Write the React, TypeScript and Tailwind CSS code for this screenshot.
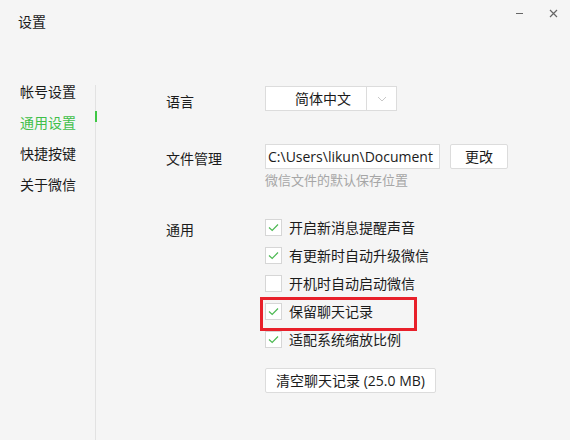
import React from "react";

const FONT = { fontFamily: '"Open Sans", "Noto Sans CJK SC", sans-serif' };

const NAV = ["帐号设置", "通用设置", "快捷按键", "关于微信"];

const OPTIONS = [
    { label: "开启新消息提醒声音", checked: true },
    { label: "有更新时自动升级微信", checked: true },
    { label: "开机时自动启动微信", checked: false },
    { label: "保留聊天记录", checked: true, marked: true },
    { label: "适配系统缩放比例", checked: true },
];

function Checkbox({ checked }: { checked: boolean }) {
    return (
        <div className="w-[17px] h-[17px] bg-white border border-[#d6d6d6] flex items-center justify-center shrink-0">
            {checked && (
                <svg width="15" height="15" viewBox="0 0 15 15">
                    <path d="M3 7.5 L6.2 10.5 L12 4.5" fill="none" stroke="#4cb952" strokeWidth="1.2" />
                </svg>
            )}
        </div>
    );
}

export default function App() {
    return (
        <div style={FONT} className="w-[570px] h-[440px] bg-[#f5f5f5] text-[#1b1b1b] flex flex-col overflow-hidden">
            {/* title bar */}
            <div className="h-[86px] shrink-0 flex items-start justify-between">
                <div className="pl-[18px] pt-[12px] text-[14px] leading-[20px]">设置</div>
                <div className="flex items-start">
                    <div className="w-[7px] h-px bg-[#666] mt-[13px]" />
                    <svg width="9" height="9" viewBox="0 0 9 9" className="mt-[9px] ml-[26px] mr-[12px]">
                        <path d="M1 1 L8 8 M8 1 L1 8" stroke="#666" strokeWidth="1.2" />
                    </svg>
                </div>
            </div>

            <div className="flex flex-1 min-h-0">
                {/* sidebar */}
                <div className="w-[96px] shrink-0 border-r border-[#e2e2e2] flex flex-col gap-[17px] -mt-px">
                    {NAV.map((item, i) => (
                        <div key={item} className="relative pl-[20px] text-[14px] leading-[14px] h-[14px]">
                            <span className={i === 1 ? "text-[#3fbf4a]" : ""}>{item}</span>
                            {i === 1 && <div className="absolute right-[-2px] top-[-5px] w-[2px] h-[11px] bg-[#3fc745]" />}
                        </div>
                    ))}
                </div>

                {/* main */}
                <div className="flex-1 pl-[70px] flex flex-col text-[14px]">
                    {/* language */}
                    <div className="flex">
                        <div className="w-[99px] pt-[6px] leading-[20px]">语言</div>
                        <div className="w-[132px] h-[25px] bg-white border border-[#dcdcdc] flex">
                            <div className="w-[101px] border-r border-[#dcdcdc] pl-[29px] leading-[23px]">简体中文</div>
                            <div className="flex-1 flex items-center justify-center">
                                <svg width="10" height="6" viewBox="0 0 10 6">
                                    <path d="M1 1 L5 5 L9 1" fill="none" stroke="#c8c8c8" strokeWidth="1" />
                                </svg>
                            </div>
                        </div>
                    </div>

                    {/* file management */}
                    <div className="flex mt-[32px]">
                        <div className="w-[99px] pt-[5px] leading-[20px]">文件管理</div>
                        <div className="flex flex-col">
                            <div className="flex gap-[10px]">
                                <div className="w-[175px] h-[25px] bg-white border border-[#dcdcdc] pl-[2px] leading-[23px] overflow-hidden whitespace-nowrap">
                                    C:\Users\likun\Document
                                </div>
                                <button className="w-[58px] h-[25px] bg-white border border-[#dcdcdc] rounded-[2px] leading-[23px]">
                                    更改
                                </button>
                            </div>
                            <div className="mt-[2px] text-[13px] leading-[18px] text-[#a6a6a6]">微信文件的默认保存位置</div>
                        </div>
                    </div>

                    {/* general */}
                    <div className="flex mt-[30px]">
                        <div className="w-[99px] pt-[1px] leading-[20px]">通用</div>
                        <div className="flex flex-col">
                            {OPTIONS.map((o) => (
                                <div key={o.label} className="relative h-[28px] flex items-start gap-[7px]">
                                    <Checkbox checked={o.checked} />
                                    <span className="leading-[18px]">{o.label}</span>
                                    {o.marked && (
                                        <div className="absolute left-[-5px] top-[-6px] w-[157px] h-[34px] border-[3px] border-[#e8202a]" />
                                    )}
                                </div>
                            ))}
                            <button className="mt-[9px] w-[171px] h-[25px] bg-white border border-[#dcdcdc] rounded-[2px] leading-[23px]">
                                清空聊天记录 (25.0 MB)
                            </button>
                        </div>
                    </div>
                </div>
            </div>
        </div>
    );
}
